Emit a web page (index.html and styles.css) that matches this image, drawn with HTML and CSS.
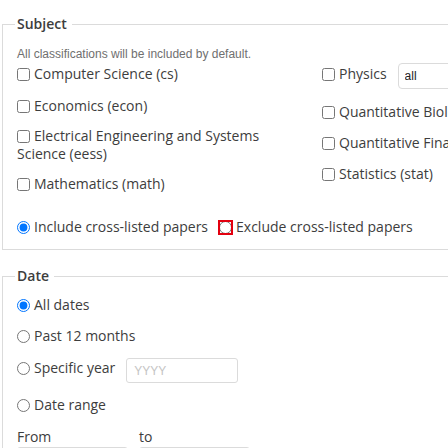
FILE: index.html
```html
<!DOCTYPE html>
<html lang="en">
<head>
<meta charset="utf-8">
<title>Advanced search</title>
<link rel="stylesheet" href="styles.css">
</head>
<body>
<fieldset class="group">
  <legend class="legend">Subject</legend>
  <p class="help">All classifications will be included by default.</p>
  <div class="cols">
    <div class="col col-left">
      <label class="item"><input class="box" type="checkbox">Computer Science (cs)</label>
      <label class="item"><input class="box" type="checkbox">Economics (econ)</label>
      <label class="item"><input class="box" type="checkbox">Electrical Engineering and Systems Science (eess)</label>
      <label class="item"><input class="box" type="checkbox">Mathematics (math)</label>
    </div>
    <div class="col col-right">
      <div class="item item-select">
        <label class="inline"><input class="box" type="checkbox">Physics</label>
        <select class="select"><option>all</option></select>
      </div>
      <label class="item"><input class="box" type="checkbox">Quantitative Biology (q-bio)</label>
      <label class="item"><input class="box" type="checkbox">Quantitative Finance (q-fin)</label>
      <label class="item"><input class="box" type="checkbox">Statistics (stat)</label>
    </div>
  </div>
  <div class="cross">
    <label class="inline"><input class="box" type="radio" name="cross" checked>Include cross-listed papers</label>
    <label class="inline exclude"><input class="box flagged" type="radio" name="cross">Exclude cross-listed papers</label>
  </div>
</fieldset>

<fieldset class="group date">
  <legend class="legend">Date</legend>
  <div class="dates">
    <label class="item"><input class="box" type="radio" name="date" checked>All dates</label>
    <label class="item"><input class="box" type="radio" name="date">Past 12 months</label>
    <div class="item item-year">
      <label class="inline year-label"><input class="box" type="radio" name="date">Specific year</label>
      <input class="text year" type="text" placeholder="YYYY">
    </div>
    <label class="item"><input class="box" type="radio" name="date">Date range</label>
    <div class="range">
      <div class="range-field">
        <span class="range-label">From</span>
        <input class="text range-input" type="text">
      </div>
      <div class="range-field">
        <span class="range-label">to</span>
        <input class="text range-input" type="text">
      </div>
    </div>
  </div>
</fieldset>
</body>
</html>
```

FILE: styles.css
```css
html, body {
  margin: 0;
  padding: 0;
  background: #fff;
  overflow: hidden;
}

body {
  font-family: "Open Sans", "Noto Sans", sans-serif;
  font-size: 14px;
  font-weight: 400;
  line-height: 18px;
  color: #3d3d3d;
  width: 448px;
  height: 448px;
}

.group {
  width: 640px;
  margin: 14px 2px 0;
  padding: 0 14px 13px;
  border: 1px solid #dbdbdb;
  box-sizing: border-box;
  min-width: 0;
}

.legend {
  font-weight: 600;
  font-size: 14px;
  line-height: 20px;
  padding: 0 5px 0 2px;
  margin-left: -2px;
}

.help {
  margin: 12px 0 3px;
  font-family: "Liberation Sans", Arial, sans-serif;
  font-size: 12px;
  line-height: 16px;
  color: #6f6f6f;
}

.cols {
  display: flex;
}

.col {
  display: flex;
  flex-direction: column;
}

.col-left {
  width: 305px;
  padding-right: 30px;
  box-sizing: border-box;
}

.item {
  display: block;
  margin-bottom: 13px;
}

.col-left .item {
  margin-bottom: 12px;
}

.col-left .item:first-child {
  margin-bottom: 14px;
}

.inline {
  display: block;
  white-space: nowrap;
}

.box {
  width: 13px;
  height: 13px;
  margin: 0 4px 0 0;
  vertical-align: -2px;
}

.item-select {
  display: flex;
  align-items: flex-start;
}

.col-right .item-select {
  margin-bottom: 14px;
}

.select {
  appearance: none;
  -webkit-appearance: none;
  margin: -2px 0 0 11px;
  width: 130px;
  height: 26px;
  padding: 0 6px;
  border: 1px solid #dbdbdb;
  border-radius: 4px;
  background: #fff;
  font-family: "Liberation Sans", Arial, sans-serif;
  font-size: 12px;
  color: #222;
}

.cross {
  display: flex;
  margin-top: 13px;
}

.exclude {
  margin-left: 11px;
}

.flagged {
  outline: 2px solid #e3000f;
  outline-offset: -1px;
  border-radius: 0;
}

.date {
  margin-top: 16px;
  padding-bottom: 40px;
}

.dates {
  display: flex;
  flex-direction: column;
  margin-top: 10px;
}

.item-year {
  display: flex;
  align-items: flex-start;
}

.item-year .year-label {
  margin-top: 1px;
}

.text {
  box-sizing: border-box;
  height: 25px;
  border: 1px solid #dbdbdb;
  border-radius: 3px;
  padding: 0 7px;
  font-family: "Liberation Sans", Arial, sans-serif;
  font-size: 12px;
  color: #363636;
  background: #fff;
}

.text::placeholder {
  color: #c4c4c4;
}

.year {
  width: 112px;
  margin-left: 11px;
}

.range {
  display: flex;
  gap: 11px;
  margin-top: 1px;
}

.range-field {
  display: flex;
  flex-direction: column;
  width: 111px;
}

.range-label {
  line-height: 18px;
  margin-bottom: 1px;
}

.range-input {
  width: 111px;
}
```
